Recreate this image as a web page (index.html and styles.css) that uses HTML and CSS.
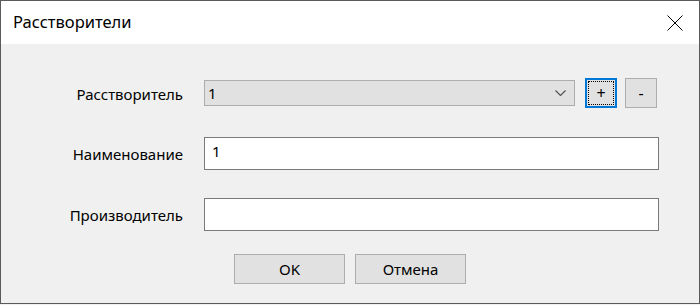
FILE: index.html
```html
<!DOCTYPE html>
<html lang="ru">
<head>
<meta charset="utf-8">
<title>Расстворители</title>
<link rel="stylesheet" href="styles.css">
</head>
<body>
<div class="window">
  <div class="titlebar">
    <span class="title">Расстворители</span>
    <svg class="close" width="16" height="16" viewBox="0 0 16 16"><path d="M0.5 0.5 L15.5 15.5 M15.5 0.5 L0.5 15.5" stroke="#000" stroke-width="1" fill="none"/></svg>
  </div>
  <div class="content">
    <div class="form">
      <label class="label">Расстворитель</label>
      <div class="row-controls">
        <div class="combo">
          <span class="combo-text">1</span>
          <svg class="chevron" width="11" height="6" viewBox="0 0 11 6"><path d="M0.5 0.5 L5.5 5.5 L10.5 0.5" stroke="#555" stroke-width="1.2" fill="none"/></svg>
        </div>
        <button class="btn small focused"><span class="focus-ring">+</span></button>
        <button class="btn small">-</button>
      </div>
      <label class="label">Наименование</label>
      <div class="field">1</div>
      <label class="label">Производитель</label>
      <div class="field"></div>
    </div>
    <div class="actions">
      <button class="btn wide">OK</button>
      <button class="btn wide">Отмена</button>
    </div>
  </div>
</div>
</body>
</html>
```

FILE: styles.css
```css
* { box-sizing: border-box; }
html, body { margin: 0; padding: 0; background: #f0f0f0; }
body {
  font-family: "Noto Sans", "Open Sans", "DejaVu Sans", sans-serif;
  color: #000;
}
.window {
  width: 700px;
  height: 304px;
  border: 1px solid #5a5a5a;
  display: flex;
  flex-direction: column;
  background: #f0f0f0;
}
.titlebar {
  height: 43px;
  background: #fff;
  display: flex;
  align-items: center;
  justify-content: space-between;
  padding: 0 16px 0 12px;
  flex: none;
}
.title { font-size: 16.5px; padding-bottom: 2px; }
.close { display: block; margin-top: 1px; }
.content {
  flex: 1;
  display: flex;
  flex-direction: column;
  padding-top: 34px;
}
.form {
  display: grid;
  grid-template-columns: 123px 455px;
  column-gap: 21px;
  row-gap: 28px;
  padding-left: 59px;
  align-items: center;
}
.label {
  font-size: 15px;
  text-align: right;
  white-space: nowrap;
}
.row-controls {
  display: flex;
  align-items: center;
  height: 30px;
  margin-bottom: 1px;
}
.combo {
  width: 371px;
  height: 26px;
  background: #e1e1e1;
  border: 1px solid #adadad;
  display: flex;
  align-items: center;
  justify-content: space-between;
  padding: 0 8px 0 3px;
  font-size: 15px;
}
.chevron { display: block; }
.btn {
  font-family: inherit;
  font-size: 15px;
  color: #000;
  background: #e1e1e1;
  border: 1px solid #adadad;
  padding: 0;
  margin: 0;
}
.small {
  width: 32px;
  height: 30px;
  margin-left: 8px;
  display: flex;
  align-items: center;
  justify-content: center;
  font-size: 16px;
}
.focused {
  margin-left: 10px;
  border: 2px solid #0078d7;
  padding: 1px;
}
.focus-ring {
  width: 100%;
  height: 100%;
  border: 1px dotted #000;
  display: flex;
  align-items: center;
  justify-content: center;
}
.field {
  height: 33px;
  background: #fff;
  border: 1px solid #7a7a7a;
  padding: 3px 7px;
  font-size: 15px;
}
.actions {
  display: flex;
  justify-content: center;
  gap: 10px;
  margin-top: 23px;
}
.wide {
  width: 111px;
  height: 30px;
}
```
